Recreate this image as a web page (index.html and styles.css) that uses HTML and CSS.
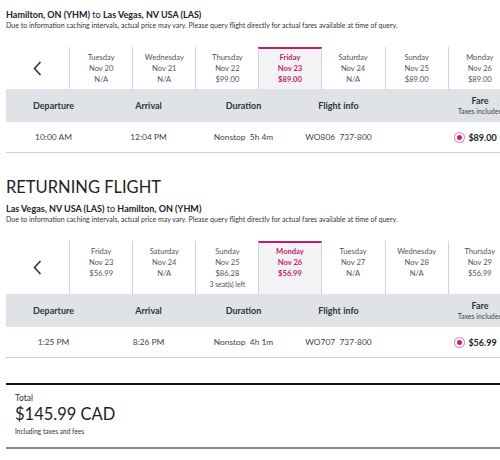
FILE: index.html
```html
<!DOCTYPE html>
<html>
<head>
<meta charset="utf-8">
<link rel="stylesheet" href="styles.css">
</head>
<body>
<div class="page">
  <section class="leg">
    <div class="route"><b>Hamilton, ON (YHM)</b> to <b>Las Vegas, NV USA (LAS)</b></div>
    <div class="note">Due to information caching intervals, actual price may vary. Please query flight directly for actual fares available at time of query.</div>
    <div class="strip">
      <div class="nav"><svg width="9" height="15" viewBox="0 0 9 15"><polyline points="7.5,1 1.5,7.5 7.5,14" fill="none" stroke="#333" stroke-width="1.6"/></svg></div>
      <div class="day"><span>Tuesday</span><span>Nov 20</span><span>N/A</span></div>
      <div class="day"><span>Wednesday</span><span>Nov 21</span><span>N/A</span></div>
      <div class="day"><span>Thursday</span><span>Nov 22</span><span>$99.00</span></div>
      <div class="day sel"><span>Friday</span><span>Nov 23</span><span>$89.00</span></div>
      <div class="day"><span>Saturday</span><span>Nov 24</span><span>N/A</span></div>
      <div class="day"><span>Sunday</span><span>Nov 25</span><span>$89.00</span></div>
      <div class="day"><span>Monday</span><span>Nov 26</span><span>$89.00</span></div>
      <div class="day"><span>Tuesday</span><span>Nov 27</span><span>N/A</span></div>
    </div>
    <div class="thead">
      <div>Departure</div><div>Arrival</div><div>Duration</div><div>Flight info</div>
      <div class="fare"><span>Fare</span><small>Taxes included</small></div>
    </div>
    <div class="trow">
      <div>10:00 AM</div><div>12:04 PM</div><div>Nonstop&nbsp; 5h 4m</div><div>WO806&nbsp; 737-800</div>
      <div class="price"><i class="radio"></i><b>$89.00</b></div>
    </div>
  </section>

  <h2 class="heading">RETURNING FLIGHT</h2>

  <section class="leg">
    <div class="route"><b>Las Vegas, NV USA (LAS)</b> to <b>Hamilton, ON (YHM)</b></div>
    <div class="note">Due to information caching intervals, actual price may vary. Please query flight directly for actual fares available at time of query.</div>
    <div class="strip">
      <div class="nav"><svg width="9" height="15" viewBox="0 0 9 15"><polyline points="7.5,1 1.5,7.5 7.5,14" fill="none" stroke="#333" stroke-width="1.6"/></svg></div>
      <div class="day"><span>Friday</span><span>Nov 23</span><span>$56.99</span></div>
      <div class="day"><span>Saturday</span><span>Nov 24</span><span>N/A</span></div>
      <div class="day"><span>Sunday</span><span>Nov 25</span><span>$86.28</span><span class="seats">3 seat(s) left</span></div>
      <div class="day sel"><span>Monday</span><span>Nov 26</span><span>$56.99</span></div>
      <div class="day"><span>Tuesday</span><span>Nov 27</span><span>N/A</span></div>
      <div class="day"><span>Wednesday</span><span>Nov 28</span><span>N/A</span></div>
      <div class="day"><span>Thursday</span><span>Nov 29</span><span>$56.99</span></div>
      <div class="day"><span>Friday</span><span>Nov 30</span><span>N/A</span></div>
    </div>
    <div class="thead">
      <div>Departure</div><div>Arrival</div><div>Duration</div><div>Flight info</div>
      <div class="fare"><span>Fare</span><small>Taxes included</small></div>
    </div>
    <div class="trow">
      <div>1:25 PM</div><div>8:26 PM</div><div>Nonstop&nbsp; 4h 1m</div><div>WO707&nbsp; 737-800</div>
      <div class="price"><i class="radio"></i><b>$56.99</b></div>
    </div>
  </section>

  <div class="total">
    <div class="t-label">Total</div>
    <div class="t-amount">$145.99 CAD</div>
    <div class="t-note">Including taxes and fees</div>
  </div>
</div>
</body>
</html>
```
FILE: styles.css
```css
html, body {
  margin: 0;
  padding: 0;
  background: #fff;
  overflow: hidden;
}
body {
  font-family: Lato, "Open Sans", sans-serif;
  color: #444;
}
.page {
  width: 568px;
  padding: 9px 0 0 6px;
}
.route {
  font-size: 9px;
  line-height: 11px;
  color: #222;
}
.route b { font-weight: 700; }
.note {
  font-size: 7px;
  line-height: 10px;
  color: #333;
}
.strip {
  margin-top: 17px;
  display: grid;
  grid-template-columns: repeat(9, 1fr);
}
.nav {
  display: flex;
  align-items: center;
  justify-content: center;
}
.day {
  display: flex;
  flex-direction: column;
  align-items: center;
  padding: 5px 0 4px;
  border-left: 1px solid #d4d4d4;
  font-size: 7.6px;
  line-height: 11px;
  color: #555;
}
.day.sel {
  background: #f3f3f5;
  border-top: 2px solid #c8196f;
  padding-top: 3px;
  border-right: 1px solid #d4d4d4;
  color: #c11d6b;
  font-weight: 700;
}
.day.sel + .day { border-left: none; }
.day .seats { font-size: 7px; letter-spacing: -0.1px; }
.thead, .trow {
  display: grid;
  grid-template-columns: 95px 95px 95px 95px 1fr;
  align-items: center;
  text-align: center;
}
.thead {
  height: 33px;
  background: #dfe3e8;
  font-size: 9px;
  font-weight: 700;
  color: #333;
}
.fare {
  display: flex;
  flex-direction: column;
  align-items: center;
  line-height: 10px;
}
.fare small {
  font-size: 7px;
  font-weight: 400;
  color: #444;
}
.trow {
  height: 30px;
  border-bottom: 1px solid #d0d0d0;
  font-size: 8.4px;
  color: #444;
}
.price {
  display: flex;
  align-items: center;
  justify-content: center;
  gap: 4px;
  padding-right: 8px;
}
.price b {
  font-size: 9px;
  color: #222;
}
.radio {
  width: 5px;
  height: 5px;
  border-radius: 50%;
  background: #d4167a;
  border: 2px solid #fff;
  box-shadow: 0 0 0 1px #e48ab8;
}
.heading {
  margin: 24px 0 0;
  font-size: 16.5px;
  line-height: 20px;
  font-weight: 400;
  color: #222;
  letter-spacing: 0;
}
.heading + .leg .route { margin-top: 6px; }
.total {
  margin-top: 25px;
  border-top: 2px solid #111;
  border-bottom: 2px solid #888;
  box-shadow: 0 1px 0 #ccc;
  padding: 8px 0 10px 9px;
  color: #333;
}
.t-label {
  font-size: 8.5px;
  line-height: 11px;
}
.t-amount {
  font-size: 16.5px;
  line-height: 20px;
  color: #222;
}
.t-note {
  font-size: 6.6px;
  line-height: 11px;
  margin-top: 2px;
}
```
